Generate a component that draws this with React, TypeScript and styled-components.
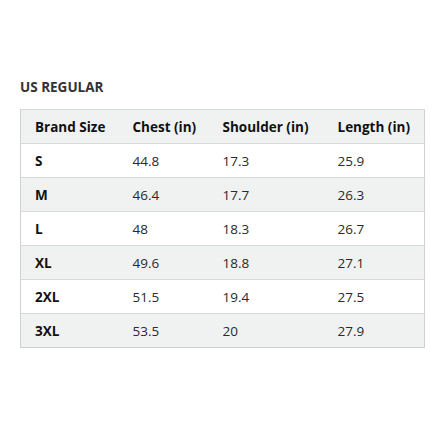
import React from "react";
import styled, { createGlobalStyle } from "styled-components";

const Global = createGlobalStyle`
  html, body { margin: 0; padding: 0; background: #fff; }
  body { font-family: "Open Sans", "Noto Sans", Arial, sans-serif; color: #0f1111; }
`;

const Page = styled.div`
  padding: 78px 21px 0 20px;
`;

const Title = styled.h2`
  margin: 0 0 13px 0;
  font-size: 13.5px;
  font-weight: 700;
  line-height: 18px;
  color: #333;
`;

const Table = styled.table`
  width: 404px;
  border-collapse: collapse;
  table-layout: fixed;
  border: 1px solid #cfd1d1;
  font-size: 13.5px;
`;

const Row = styled.tr<{ $shade: boolean }>`
  background: ${(p) => (p.$shade ? "#f0f2f2" : "#ffffff")};
  border-top: 1px solid #d5d9d9;
`;

const Th = styled.th`
  text-align: left;
  font-weight: 700;
  height: 33px;
  padding: 0 0 0 14px;
  color: #111;
`;

const Td = styled.td<{ $bold?: boolean }>`
  height: 33px;
  padding: 0 0 0 14px;
  font-weight: ${(p) => (p.$bold ? 700 : 400)};
  color: ${(p) => (p.$bold ? "#111" : "#2a2a2a")};
`;

const cols = [98, 90, 115, 101];
const headers = ["Brand Size", "Chest (in)", "Shoulder (in)", "Length (in)"];
const data = [
  ["S", "44.8", "17.3", "25.9"],
  ["M", "46.4", "17.7", "26.3"],
  ["L", "48", "18.3", "26.7"],
  ["XL", "49.6", "18.8", "27.1"],
  ["2XL", "51.5", "19.4", "27.5"],
  ["3XL", "53.5", "20", "27.9"],
];

export default function App() {
  return (
    <>
      <Global />
      <Page>
        <Title>US REGULAR</Title>
        <Table>
          <colgroup>
            {cols.map((w, i) => (
              <col key={i} style={{ width: w }} />
            ))}
          </colgroup>
          <thead>
            <Row $shade>
              {headers.map((h) => (
                <Th key={h}>{h}</Th>
              ))}
            </Row>
          </thead>
          <tbody>
            {data.map((r, i) => (
              <Row key={r[0]} $shade={i % 2 === 1}>
                {r.map((c, j) => (
                  <Td key={j} $bold={j === 0}>
                    {c}
                  </Td>
                ))}
              </Row>
            ))}
          </tbody>
        </Table>
      </Page>
    </>
  );
}
